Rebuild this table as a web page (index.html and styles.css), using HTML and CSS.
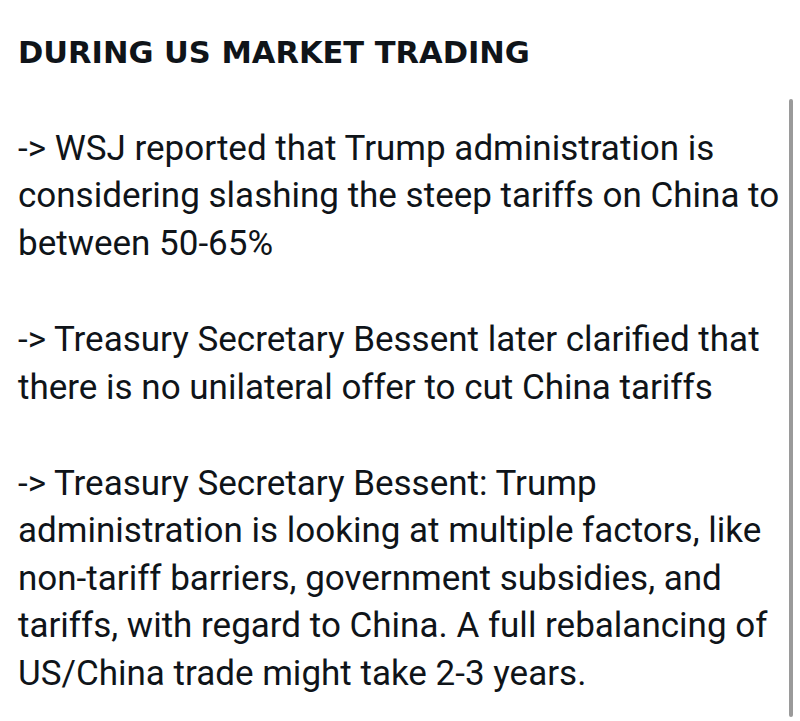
FILE: index.html
```html
<!DOCTYPE html>
<html lang="en">
<head>
<meta charset="utf-8">
<title>During US market trading</title>
<link rel="stylesheet" href="styles.css">
</head>
<body>
<main class="post">
  <h1 class="post-title">DURING US MARKET TRADING</h1>
  <p class="post-item">-&gt; WSJ reported that Trump administration is considering slashing the steep tariffs on China to between 50-65%</p>
  <p class="post-item">-&gt; Treasury Secretary Bessent later clarified that there is no unilateral offer to cut China tariffs</p>
  <p class="post-item">-&gt; Treasury Secretary Bessent: Trump administration is looking at multiple factors, like non-tariff barriers, government subsidies, and tariffs, with regard to China. A full rebalancing of US/China trade might take 2-3 years.</p>
</main>
<div class="scroll-indicator"></div>
</body>
</html>
```
FILE: styles.css
```css
html, body {
  margin: 0;
  padding: 0;
  background: #ffffff;
}

body {
  width: 800px;
  height: 721px;
  overflow: hidden;
  position: relative;
  font-family: Roboto, "Liberation Sans", sans-serif;
  color: #0f1419;
}

.post {
  padding: 33px 0 0 18px;
  width: 764px;
}

.post-title {
  margin: 0 0 52px 0;
  font-family: "DejaVu Sans", Roboto, sans-serif;
  font-size: 30.5px;
  line-height: 40px;
  font-weight: 700;
  letter-spacing: 0;
}

.post-item {
  margin: 0 0 49px 0;
  font-size: 35px;
  line-height: 47.4px;
  font-weight: 400;
}

.scroll-indicator {
  position: absolute;
  left: 789px;
  top: 99px;
  width: 4px;
  height: 618px;
  border-radius: 2px;
  background: #9a9a9a;
}
```
